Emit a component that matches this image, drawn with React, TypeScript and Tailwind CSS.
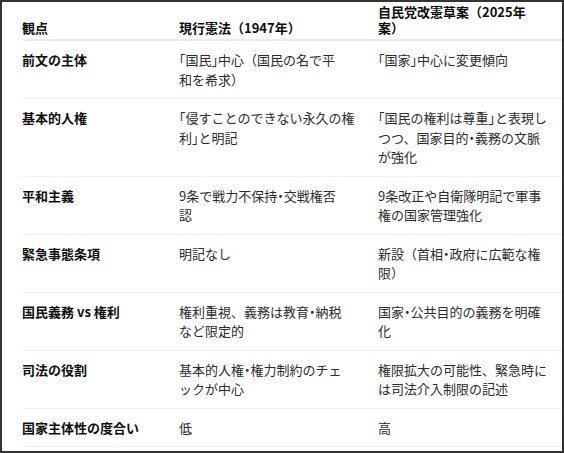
import React from "react";

const rows: { k: string; a: string[]; b: string[] }[] = [
  { k: "前文の主体", a: ["「国民」中心（国民の名で平", "和を希求）"], b: ["「国家」中心に変更傾向"] },
  {
    k: "基本的人権",
    a: ["「侵すことのできない永久の権", "利」と明記"],
    b: ["「国民の権利は尊重」と表現し", "つつ、国家目的・義務の文脈", "が強化"],
  },
  { k: "平和主義", a: ["9条で戦力不保持・交戦権否", "認"], b: ["9条改正や自衛隊明記で軍事", "権の国家管理強化"] },
  { k: "緊急事態条項", a: ["明記なし"], b: ["新設（首相・政府に広範な権", "限）"] },
  { k: "国民義務 vs 権利", a: ["権利重視、義務は教育・納税", "など限定的"], b: ["国家・公共目的の義務を明確", "化"] },
  { k: "司法の役割", a: ["基本的人権・権力制約のチェ", "ックが中心"], b: ["権限拡大の可能性、緊急時に", "は司法介入制限の記述"] },
  { k: "国家主体性の度合い", a: ["低"], b: ["高"] },
];

function Txt({ s }: { s: string }) {
  const parts = s.split(/([「」・])/);
  return (
    <>
      {parts.map((p, i) =>
        p === "「" || p === "」" || p === "・" ? (
          <span key={i} className="[font-feature-settings:'halt']">
            {p}
          </span>
        ) : (
          <React.Fragment key={i}>{p}</React.Fragment>
        )
      )}
    </>
  );
}

function Lines({ lines }: { lines: string[] }) {
  return (
    <div>
      {lines.map((l, i) => (
        <div key={i} className="whitespace-nowrap">
          <Txt s={l} />
        </div>
      ))}
    </div>
  );
}

export default function App() {
  return (
    <div
      className="w-[564px] h-[453px] border-2 border-[#333] bg-white overflow-hidden text-[13px] text-[#2b2b2b]"
      style={{ fontFamily: '"Noto Sans CJK JP", "Noto Sans", sans-serif' }}
    >
      <div className="pl-[20px]">
        <div className="grid grid-cols-[157px_199px_1fr] items-end h-[39px] pb-[3px] border-b-2 border-[#ececec] font-bold leading-[16px] text-[#0d0d0d]">
          <div>観点</div>
          <div className="whitespace-nowrap">現行憲法（1947年）</div>
          <div>
            <div className="whitespace-nowrap">自民党改憲草案（2025年</div>
            <div>案）</div>
          </div>
        </div>
        {rows.map((r, i) => (
          <div
            key={i}
            className="grid grid-cols-[157px_199px_1fr] items-start py-[9px] leading-[19.5px] border-b border-[#f0f0f0]"
          >
            <div className="font-bold text-[#0d0d0d] whitespace-nowrap">{r.k}</div>
            <Lines lines={r.a} />
            <Lines lines={r.b} />
          </div>
        ))}
      </div>
    </div>
  );
}
